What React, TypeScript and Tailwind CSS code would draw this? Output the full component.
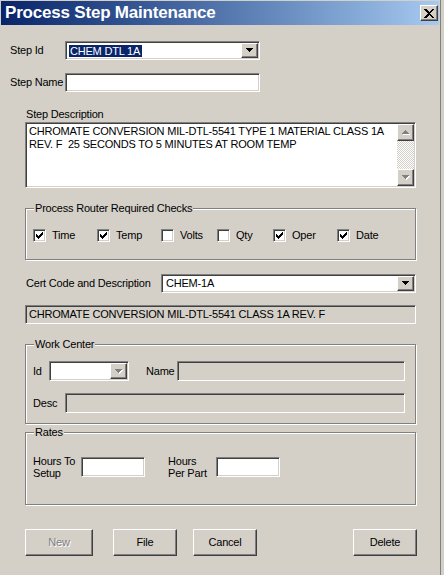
import React from 'react';

const sunken =
  'border border-t-[#808080] border-l-[#808080] border-b-white border-r-white shadow-[inset_1px_1px_0_#404040,inset_-1px_-1px_0_#d4d0c8]';
const raised =
  'border border-t-white border-l-white border-b-[#404040] border-r-[#404040] shadow-[inset_-1px_-1px_0_#808080]';
const etched = 'relative border border-[#808080] shadow-[inset_1px_1px_0_#fff,1px_1px_0_#fff]';

function Arrow({ up = false, dim = false }: { up?: boolean; dim?: boolean }) {
  const rows = [7, 5, 3, 1];
  const order = up ? [...rows].reverse() : rows;
  return (
    <svg width="8" height="5" viewBox="0 0 8 5" shapeRendering="crispEdges">
      {dim &&
        order.map((w, i) => (
          <rect key={'s' + i} x={(7 - w) / 2 + 1} y={i + 1} width={w} height={1} fill="#fff" />
        ))}
      {order.map((w, i) => (
        <rect key={i} x={(7 - w) / 2} y={i} width={w} height={1} fill={dim ? '#808080' : '#000'} />
      ))}
    </svg>
  );
}

function Combo({
  className,
  value,
  selected = false,
  disabled = false,
}: {
  className: string;
  value?: string;
  selected?: boolean;
  disabled?: boolean;
}) {
  return (
    <div className={`${sunken} ${className} bg-white flex p-px`}>
      <div className="flex-1 flex items-center pl-[2px] overflow-hidden whitespace-nowrap">
        {value && (
          <span className={selected ? 'bg-[#0a246a] text-white pl-px pr-[2px] leading-[12px]' : 'pl-px'}>
            {value}
          </span>
        )}
      </div>
      <div className={`${raised} w-[17px] bg-[#d4d0c8] flex items-center justify-center`}>
        <Arrow dim={disabled} />
      </div>
    </div>
  );
}

function Field({ className, value, gray = false }: { className: string; value?: string; gray?: boolean }) {
  return (
    <div
      className={`${sunken} ${className} ${gray ? 'bg-[#d4d0c8]' : 'bg-white'} flex items-center pl-[3px] whitespace-nowrap`}
    >
      {value}
    </div>
  );
}

function Check({ label, checked, className }: { label: string; checked: boolean; className?: string }) {
  return (
    <div className={`flex items-center ${className ?? ''}`}>
      <div className={`${sunken} w-[13px] h-[13px] bg-white flex items-center justify-center`}>
        {checked && (
          <svg width="7" height="7" viewBox="0 0 7 7" shapeRendering="crispEdges">
            <path d="M0 2h1v1h1v1h1V3h1V2h1V1h1V0h1v3H6v1H5v1H4v1H3v1H2V6H1V5H0z" fill="#000" />
          </svg>
        )}
      </div>
      <span className="ml-[6px]">{label}</span>
    </div>
  );
}

function Group({ title, className, children }: { title: string; className: string; children?: React.ReactNode }) {
  return (
    <div className={`${etched} ${className}`}>
      <span className="absolute top-[-7px] left-[8px] px-px bg-[#d4d0c8] leading-[13px]">{title}</span>
      {children}
    </div>
  );
}

function Button({ label, className, disabled = false }: { label: string; className: string; disabled?: boolean }) {
  return (
    <div
      className={`${raised} ${className} h-[27px] flex items-center justify-center ${
        disabled ? 'text-[#808080] [text-shadow:1px_1px_0_#fff]' : 'text-black'
      }`}
    >
      {label}
    </div>
  );
}

export default function App() {
  return (
    <div className="w-[444px] h-[575px] bg-[#d4d0c8] overflow-hidden font-['Liberation_Sans',Arial,sans-serif] text-[11px] tracking-[-0.2px] text-black leading-[13px] select-none">
      <div className="w-[441px] h-[575px] border-r border-[#808080] pt-px pl-px">
        {/* title bar */}
        <div className="w-[438px] h-[24px] bg-gradient-to-r from-[#0a246a] to-[#a6caf0] flex items-center justify-between pl-[4px] pr-[1px]">
          <span className="text-white font-bold text-[17px] tracking-[-0.2px] leading-[20px]">Process Step Maintenance</span>
          <div className={`${raised} w-[18px] h-[16px] bg-[#d4d0c8] flex items-center justify-center`}>
            <svg width="10" height="9" viewBox="0 0 10 9" shapeRendering="crispEdges">
              <path d="M0 0h2l3 3 3-3h2L6 4.5 10 9H8L5 6 2 9H0l4-4.5z" fill="#000" />
            </svg>
          </div>
        </div>

        {/* step id */}
        <div className="mt-[16px] ml-[9px] flex items-center">
          <span className="w-[55px]">Step Id</span>
          <Combo className="w-[195px] h-[19px]" value="CHEM DTL 1A" selected />
        </div>
        <div className="mt-[13px] ml-[9px] flex items-center">
          <span className="w-[55px]">Step Name</span>
          <Field className="w-[195px] h-[19px]" />
        </div>

        {/* description */}
        <div className="mt-[16px] ml-[24px] w-[391px]">
          <div className="pl-px">Step Description</div>
          <div className={`${sunken} mt-px h-[66px] bg-white flex p-px`}>
            <div className="flex-1 pl-[2px] pt-px leading-[13px]">
              CHROMATE CONVERSION MIL-DTL-5541 TYPE 1 MATERIAL CLASS 1A
              <br />
              REV. F&nbsp; 25 SECONDS TO 5 MINUTES AT ROOM TEMP
            </div>
            <div className="w-[17px] flex flex-col">
              <div className={`${raised} h-[17px] bg-[#d4d0c8] flex items-center justify-center`}>
                <Arrow up dim />
              </div>
              <div className="flex-1 bg-[image:repeating-conic-gradient(#fff_0%_25%,#d4d0c8_0%_50%)] bg-[length:2px_2px]" />
              <div className={`${raised} h-[17px] bg-[#d4d0c8] flex items-center justify-center`}>
                <Arrow dim />
              </div>
            </div>
          </div>
        </div>

        {/* checks */}
        <Group title="Process Router Required Checks" className="mt-[20px] ml-[24px] w-[391px] h-[52px]">
          <div className="pt-[20px] pl-[7px] flex items-center">
            <Check label="Time" checked className="w-[64px]" />
            <Check label="Temp" checked className="w-[64px]" />
            <Check label="Volts" checked={false} className="w-[56px]" />
            <Check label="Qty" checked={false} className="w-[56px]" />
            <Check label="Oper" checked className="w-[64px]" />
            <Check label="Date" checked />
          </div>
        </Group>

        {/* cert */}
        <div className="mt-[14px] ml-[24px] flex items-center">
          <span className="w-[136px] pl-px">Cert Code and Description</span>
          <Combo className="w-[255px] h-[19px]" value="CHEM-1A" />
        </div>
        <Field
          className="mt-[12px] ml-[24px] w-[391px] h-[19px]"
          value="CHROMATE CONVERSION MIL-DTL-5541 CLASS 1A REV. F"
          gray
        />

        {/* work center */}
        <Group title="Work Center" className="mt-[20px] ml-[24px] w-[391px] h-[80px]">
          <div className="pt-[16px] pl-[7px] flex items-center">
            <span className="w-[16px]">Id</span>
            <Combo className="w-[80px] h-[20px]" disabled />
            <span className="ml-[17px] w-[31px]">Name</span>
            <Field className="w-[228px] h-[20px]" gray />
          </div>
          <div className="mt-[12px] pl-[7px] flex items-center">
            <span className="w-[32px]">Desc</span>
            <Field className="w-[340px] h-[20px]" gray />
          </div>
        </Group>

        {/* rates */}
        <Group title="Rates" className="mt-[8px] ml-[24px] w-[391px] h-[73px]">
          <div className="pt-[22px] pl-[7px] flex items-center">
            <span className="w-[48px] leading-[12px]">
              Hours To
              <br />
              Setup
            </span>
            <Field className="w-[64px] h-[20px]" />
            <span className="ml-[23px] w-[48px] leading-[12px]">
              Hours
              <br />
              Per Part
            </span>
            <Field className="w-[64px] h-[20px]" />
          </div>
        </Group>

        {/* buttons */}
        <div className="mt-[24px] ml-[24px] flex">
          <Button label="New" className="w-[68px]" disabled />
          <Button label="File" className="ml-[20px] w-[64px]" />
          <Button label="Cancel" className="ml-[16px] w-[64px]" />
          <Button label="Delete" className="ml-[96px] w-[64px]" />
        </div>
      </div>
    </div>
  );
}
